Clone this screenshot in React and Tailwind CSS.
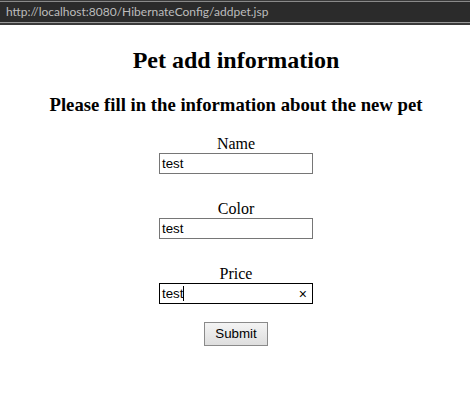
import React from "react";

export default function App() {
  const serif = { fontFamily: '"Liberation Serif", "Times New Roman", serif' };
  return (
    <div className="w-[470px] h-[405px] bg-white overflow-hidden">
      <div className="h-[25px] bg-[#3a3a3a] pt-px">
        <div className="h-[22px] border-t border-b border-t-[#8a8a8a] border-b-[#9a9a9a] bg-[#2b2b2b] flex items-center pl-[6px]">
          <span
            className="text-[12px] text-[#bcbcbc]"
            style={{ fontFamily: 'Lato, "Open Sans", sans-serif' }}
          >
            http://localhost:8080/HibernateConfig/addpet.jsp
          </span>
        </div>
      </div>
      <div className="flex flex-col items-center text-black pl-[2px]" style={serif}>
        <h2 className="text-[24px] font-bold leading-[27px] mt-[22px]">Pet add information</h2>
        <h3 className="text-[18.72px] font-bold leading-[21px] mt-[20px]">
          Please fill in the information about the new pet
        </h3>
        <div className="flex flex-col items-center mt-[20px]">
          <label className="text-[16px] leading-[18px]">Name</label>
          <div className="w-[154px] h-[21px] border border-[#767676] flex items-center px-[2px] text-[13.33px]" style={{ fontFamily: '"Liberation Sans", Arial, sans-serif' }}>test</div>
          <label className="text-[16px] leading-[18px] mt-[26px]">Color</label>
          <div className="w-[154px] h-[21px] border border-[#767676] flex items-center px-[2px] text-[13.33px]" style={{ fontFamily: '"Liberation Sans", Arial, sans-serif' }}>test</div>
          <label className="text-[16px] leading-[18px] mt-[26px]">Price</label>
          <div className="w-[154px] h-[21px] border border-black flex items-center justify-between pl-[2px] pr-[5px] text-[13.33px]" style={{ fontFamily: '"Liberation Sans", Arial, sans-serif' }}>
            <span className="flex items-center">test<span className="inline-block w-px h-[15px] bg-black"></span></span>
            <span className="text-[14px] leading-none">×</span>
          </div>
          <button className="mt-[18px] w-[64px] h-[24px] border border-[#8a8a8a] bg-gradient-to-b from-[#f4f4f4] to-[#dedede] text-[13.33px] text-black" style={{ fontFamily: '"Liberation Sans", Arial, sans-serif' }}>Submit</button>
        </div>
      </div>
    </div>
  );
}
